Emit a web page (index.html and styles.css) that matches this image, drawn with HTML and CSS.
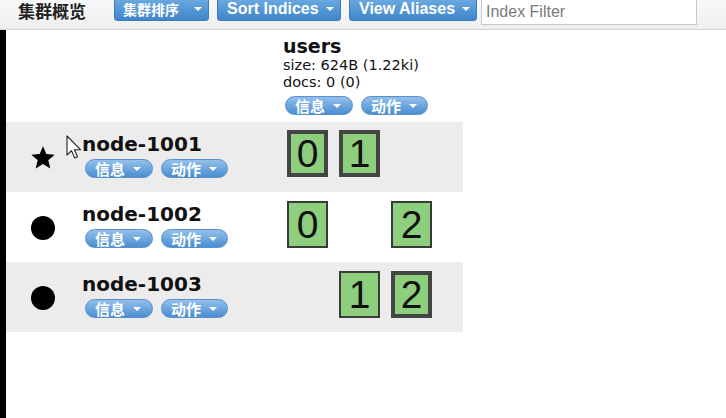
FILE: index.html
```html
<!DOCTYPE html>
<html>
<head>
<meta charset="utf-8">
<link rel="stylesheet" href="styles.css">
</head>
<body>
<div class="topbar">
  <h1 class="title">集群概览</h1>
  <div class="tbtn cjk">集群排序<span class="caret"></span></div>
  <div class="tbtn sort">Sort Indices<span class="caret"></span></div>
  <div class="tbtn alias">View Aliases<span class="caret"></span></div>
  <input class="filter" type="text" placeholder="Index Filter">
</div>
<div class="main">
  <div class="overview">
    <div class="row head">
      <div class="node"></div>
      <div class="index">
        <div class="iname">users</div>
        <div class="istat">size: 624B (1.22ki)</div>
        <div class="istat">docs: 0 (0)</div>
        <div class="pills ipills">
          <span class="pill">信息<span class="pcaret"></span></span>
          <span class="pill">动作<span class="pcaret"></span></span>
        </div>
      </div>
    </div>

    <div class="row alt">
      <div class="node">
        <div class="nicon">
          <svg width="28" height="28" viewBox="0 0 24 24"><path d="M12 1.2l3.1 7.2 7.7.6-5.9 5.1 1.9 7.6L12 17.6l-6.8 4.1 1.9-7.6-5.9-5.1 7.7-.6z" fill="#000"/></svg>
        </div>
        <div class="ninfo">
          <div class="nname">node-1001</div>
          <div class="pills npills">
            <span class="pill">信息<span class="pcaret"></span></span>
            <span class="pill">动作<span class="pcaret"></span></span>
          </div>
        </div>
      </div>
      <div class="shards">
        <div class="shard primary">0</div>
        <div class="shard primary">1</div>
      </div>
      <svg class="cursor" width="15" height="24" viewBox="0 0 15 24"><path d="M1 1v19l4.5-4.3 3.2 7.2 2.8-1.2-3.1-7h6.1z" fill="#fff" stroke="#222" stroke-width="1.1" stroke-linejoin="round"/></svg>
    </div>

    <div class="row">
      <div class="node">
        <div class="nicon"><span class="dot"></span></div>
        <div class="ninfo">
          <div class="nname">node-1002</div>
          <div class="pills npills">
            <span class="pill">信息<span class="pcaret"></span></span>
            <span class="pill">动作<span class="pcaret"></span></span>
          </div>
        </div>
      </div>
      <div class="shards">
        <div class="shard">0</div>
        <div class="slot"></div>
        <div class="shard">2</div>
      </div>
    </div>

    <div class="row alt">
      <div class="node">
        <div class="nicon"><span class="dot"></span></div>
        <div class="ninfo">
          <div class="nname">node-1003</div>
          <div class="pills npills">
            <span class="pill">信息<span class="pcaret"></span></span>
            <span class="pill">动作<span class="pcaret"></span></span>
          </div>
        </div>
      </div>
      <div class="shards">
        <div class="slot"></div>
        <div class="shard">1</div>
        <div class="shard primary">2</div>
      </div>
    </div>
  </div>
</div>
</body>
</html>
```
FILE: styles.css
```css
html, body {
  margin: 0;
  background: #fff;
}
body {
  font-family: "DejaVu Sans", Verdana, "Noto Sans CJK SC", sans-serif;
  color: #111;
}

/* top bar */
.topbar {
  display: flex;
  align-items: flex-start;
  gap: 8px;
  height: 29px;
  padding-left: 18px;
  border-bottom: 1px solid #d2d2d2;
  background: linear-gradient(#f9f9f9, #eeeeee);
}
.title {
  margin: 0 20px 0 0;
  font: bold 17px/22px "Noto Sans CJK SC", sans-serif;
  color: #222;
}
.tbtn {
  display: flex;
  align-items: center;
  height: 24px;
  box-sizing: border-box;
  margin-top: -3px;
  padding: 0 6px 0 9px;
  border: 1px solid #3b7cbf;
  border-radius: 3px;
  background: linear-gradient(#6dabe3, #3f86c9);
  color: #fff;
  font: bold 16px "Liberation Sans", Arial, sans-serif;
  white-space: nowrap;
}
.tbtn.cjk {
  width: 95px;
  padding-left: 8px;
  font: bold 14px "Noto Sans CJK SC", sans-serif;
}
.tbtn.sort { width: 124px; }
.tbtn.alias { width: 128px; }
.caret {
  width: 0;
  height: 0;
  margin-left: auto;
  border-left: 4px solid transparent;
  border-right: 4px solid transparent;
  border-top: 4px solid #fff;
}
.filter {
  width: 216px;
  height: 26px;
  margin: -1px 0 0 -4px;
  box-sizing: border-box;
  border: 1px solid #c9c9c9;
  padding: 0 4px;
  font: 16px "Liberation Sans", Arial, sans-serif;
  background: #fff;
  outline: none;
}
.filter::placeholder { color: #7a7a7a; }

/* main */
.main {
  border-left: 6px solid #000;
  min-height: 388px;
}
.overview { width: 457px; }
.row {
  position: relative;
  display: flex;
  height: 70px;
}
.row.alt { background: #ececec; }
.row.head { height: 92px; }
.node {
  display: flex;
  width: 274px;
}
.index {
  padding: 5px 0 0 3px;
}
.iname {
  font: bold 19px/22px "DejaVu Sans", Verdana, sans-serif;
}
.istat {
  font: 14.5px/17px "DejaVu Sans", Verdana, sans-serif;
}

/* pill buttons */
.pills {
  display: flex;
  gap: 8px;
}
.ipills { margin: 5px 0 0 2px; }
.npills { margin: 3px 0 0 3px; }
.pill {
  display: flex;
  align-items: center;
  width: 68px;
  height: 19px;
  box-sizing: border-box;
  padding: 1px 0 0 9px;
  border: 1px solid #5b8fcb;
  border-radius: 10px;
  background: linear-gradient(#93c0ec, #4a8ed1);
  color: #fff;
  font: bold 15px/16px "Noto Sans CJK SC", sans-serif;
}
.pill + .pill { width: 67px; }
.pcaret {
  width: 0;
  height: 0;
  margin-left: 8px;
  border-left: 4px solid transparent;
  border-right: 4px solid transparent;
  border-top: 4px solid #fff;
}

/* nodes */
.nicon {
  display: flex;
  align-items: center;
  justify-content: center;
  width: 26px;
  margin: 2px 26px 0 24px;
}
.dot {
  width: 24px;
  height: 24px;
  border-radius: 50%;
  background: #000;
}
.ninfo { padding-top: 10px; }
.nname {
  font: bold 20px/24px "DejaVu Sans", Verdana, sans-serif;
  color: #111;
}

/* shards */
.shards {
  display: flex;
  align-items: flex-start;
  gap: 11px;
  padding: 9px 0 0 7px;
}
.shard, .slot {
  width: 41px;
  height: 47px;
  box-sizing: border-box;
}
.shard {
  border: 2px solid #3a3a3a;
  background: #8ecf7d;
  font: 39px/44px "Liberation Sans", Arial, sans-serif;
  text-align: center;
  color: #111;
}
.shard.primary {
  border: 4px solid #454545;
  line-height: 40px;
}
.row.alt .shards { padding-top: 8px; }
.row.alt:last-child .shards { padding-top: 9px; }

.cursor {
  position: absolute;
  left: 60px;
  top: 13px;
}
```
